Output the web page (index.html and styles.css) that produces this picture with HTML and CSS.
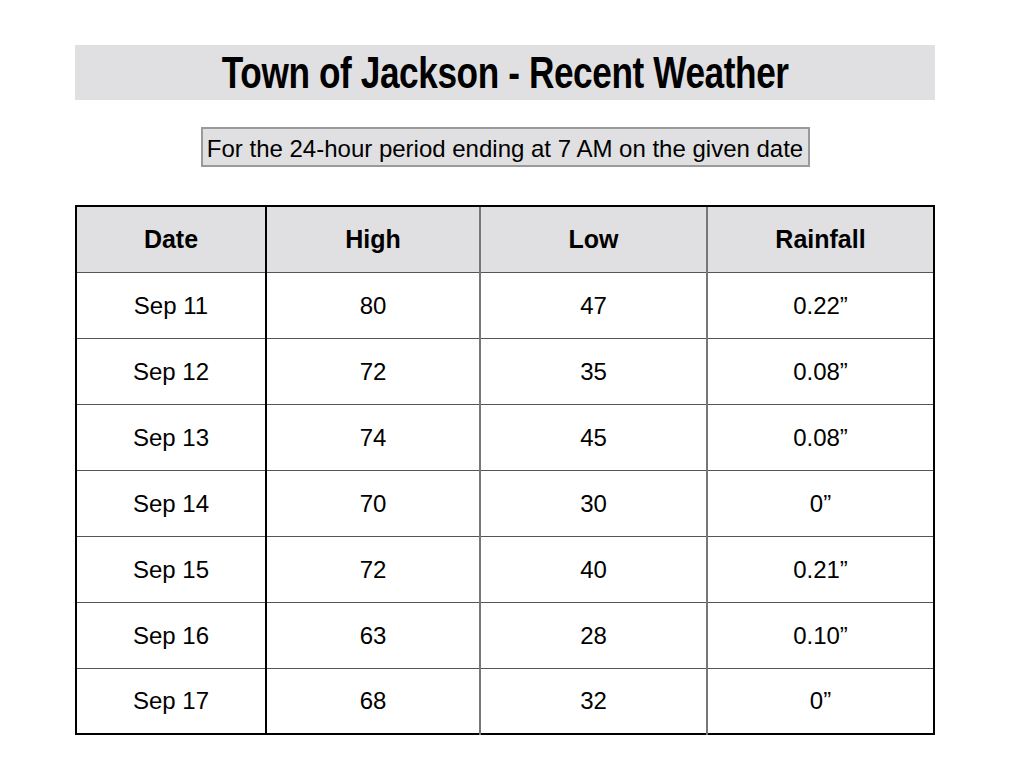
FILE: index.html
```html
<!DOCTYPE html>
<html>
<head>
<meta charset="utf-8">
<link rel="stylesheet" href="styles.css">
</head>
<body>
<div class="page">
  <div class="title-bar"><h1 class="title">Town of Jackson - Recent Weather</h1></div>
  <div class="sub-wrap"><div class="subtitle">For the 24-hour period ending at 7 AM on the given date</div></div>
  <table class="weather">
    <thead>
      <tr><th class="c1">Date</th><th class="c2">High</th><th class="c3">Low</th><th class="c4">Rainfall</th></tr>
    </thead>
    <tbody>
      <tr><td class="c1">Sep 11</td><td>80</td><td>47</td><td>0.22”</td></tr>
      <tr><td class="c1">Sep 12</td><td>72</td><td>35</td><td>0.08”</td></tr>
      <tr><td class="c1">Sep 13</td><td>74</td><td>45</td><td>0.08”</td></tr>
      <tr><td class="c1">Sep 14</td><td>70</td><td>30</td><td>0”</td></tr>
      <tr><td class="c1">Sep 15</td><td>72</td><td>40</td><td>0.21”</td></tr>
      <tr><td class="c1">Sep 16</td><td>63</td><td>28</td><td>0.10”</td></tr>
      <tr><td class="c1">Sep 17</td><td>68</td><td>32</td><td>0”</td></tr>
    </tbody>
  </table>
</div>
</body>
</html>
```

FILE: styles.css
```css
html, body {
  margin: 0;
  padding: 0;
  background: #ffffff;
}
body {
  font-family: "Liberation Sans", Arial, sans-serif;
  color: #000;
}
.page {
  width: 860px;
  margin-left: 75px;
  padding-top: 45px;
}
.title-bar {
  background: #e0e0e2;
  height: 55px;
  display: flex;
  align-items: center;
  justify-content: center;
}
.title {
  margin: 0;
  font-family: "Liberation Sans", Arial, sans-serif;
  font-weight: bold;
  font-size: 44px;
  letter-spacing: -0.5px;
  line-height: 1;
  transform: scaleX(0.8);
  white-space: nowrap;
}
.sub-wrap {
  display: flex;
  justify-content: center;
  margin-top: 27px;
}
.subtitle {
  box-sizing: border-box;
  height: 40px;
  width: 609px;
  padding-top: 3px;
  border: 2px solid #9a9a9a;
  background: #e0e0e2;
  font-size: 24px;
  display: flex;
  align-items: center;
  justify-content: center;
  white-space: nowrap;
}
.weather {
  margin-top: 38px;
  width: 858px;
  border-collapse: collapse;
  border: 2px solid #000;
  table-layout: fixed;
  font-size: 24px;
}
.weather th, .weather td {
  height: 66px;
  padding: 1px 0 0;
  text-align: center;
  vertical-align: middle;
  border-top: 1px solid #555;
  border-left: 2px solid #777;
  box-sizing: border-box;
}
.weather th {
  background: #e0e0e2;
  font-weight: bold;
  font-size: 25px;
  border-top: 2px solid #000;
}
.weather .c1 { border-left: 2px solid #000; }
.weather td:nth-child(2), .weather th.c2 { border-left: 2px solid #000; }
.weather .c1 { width: 190px; }
.weather .c2 { width: 214px; }
.weather .c3 { width: 227px; }
.weather .c4 { width: 227px; }
```
